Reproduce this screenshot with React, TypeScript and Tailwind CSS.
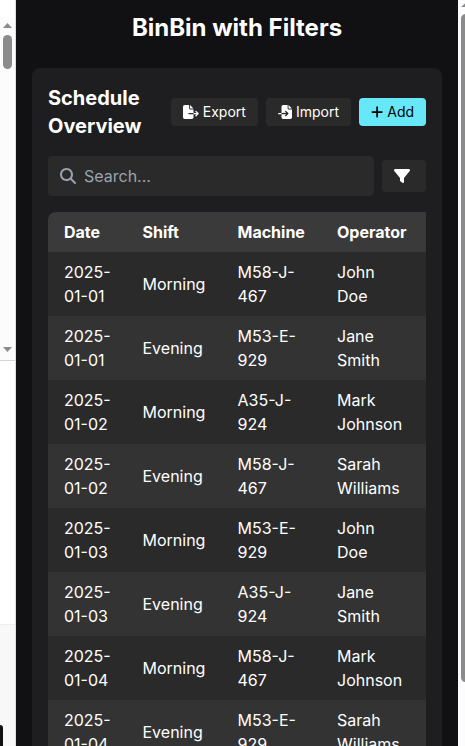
import React from "react";
import { FaFileExport, FaFileImport, FaFilter, FaMagnifyingGlass, FaPlus } from "react-icons/fa6";

const rows = [
  ["2025-01-01", "Morning", "M58-J-467", "John Doe"],
  ["2025-01-01", "Evening", "M53-E-929", "Jane Smith"],
  ["2025-01-02", "Morning", "A35-J-924", "Mark Johnson"],
  ["2025-01-02", "Evening", "M58-J-467", "Sarah Williams"],
  ["2025-01-03", "Morning", "M53-E-929", "John Doe"],
  ["2025-01-03", "Evening", "A35-J-924", "Jane Smith"],
  ["2025-01-04", "Morning", "M58-J-467", "Mark Johnson"],
  ["2025-01-04", "Evening", "M53-E-929", "Sarah Williams"],
];

function LeftPane() {
  return (
    <div className="flex w-4 shrink-0 flex-col border-r border-[#dedede] bg-white">
      <div className="h-[17px] shrink-0" />
      <div className="flex h-[344px] shrink-0 flex-col items-center border-b border-[#d4d4d4] bg-[#fcfcfc] pt-1.5">
        <svg className="h-[5px] w-[9px] shrink-0" viewBox="0 0 9 5" fill="#8b8b8b">
          <path d="M0 5 4.5 0 9 5Z" />
        </svg>
        <div className="mt-[7px] h-[34px] w-[9px] shrink-0 rounded-full bg-[#8b8b8b]" />
        <svg className="mt-auto mb-[8px] h-[5px] w-[9px] shrink-0" viewBox="0 0 9 5" fill="#8b8b8b">
          <path d="M0 0h9L4.5 5Z" />
        </svg>
      </div>
      <div className="h-[263px] shrink-0" />
      <div className="flex flex-1 flex-col justify-end border-t border-[#ededed] bg-[#f8f8f8]">
        <div className="h-[21px] w-[3px] rounded-tr-[3px] bg-[#111113]" />
      </div>
    </div>
  );
}

function RightScrollbar() {
  return (
    <div className="flex w-[7px] shrink-0 flex-col overflow-hidden bg-[#fcfcfc] pl-[3px]">
      <svg className="mt-[3px] h-1 w-[9px] shrink-0" viewBox="0 0 9 4" fill="#8b8b8b">
        <path d="M0 4 4.5 0 9 4Z" />
      </svg>
      <div className="mt-[7px] h-[668px] w-[9px] shrink-0 rounded-full bg-[#8b8b8b]" />
    </div>
  );
}

export default function App() {
  return (
    <div className="flex h-[746px] w-[465px] overflow-hidden bg-[#111113] font-['Inter',sans-serif] text-white">
      <LeftPane />
      <main className="flex w-[442px] shrink-0 flex-col px-4 pt-3">
        <h1 className="mb-6 text-center text-2xl font-bold">BinBin with Filters</h1>
        <section className="flex-1 rounded-t-lg bg-[#1e1e20] p-4">
          <div className="mb-4 flex items-center justify-between">
            <h2 className="w-[110px] text-xl leading-7 font-bold">Schedule Overview</h2>
            <div className="flex gap-2 text-sm">
              <button className="flex h-7 w-[87px] items-center gap-1 rounded bg-[#2a2a2a] pl-3">
                <FaFileExport className="h-3.5 w-[15.75px] shrink-0" />
                Export
              </button>
              <button className="flex h-7 w-[85px] items-center gap-1 rounded bg-[#2a2a2a] pl-3">
                <FaFileImport className="size-3.5 shrink-0" />
                Import
              </button>
              <button className="flex h-7 w-[67px] items-center gap-1 rounded bg-[#67e8f9] pl-3 text-black">
                <FaPlus className="h-3.5 w-[12.25px] shrink-0" />
                Add
              </button>
            </div>
          </div>
          <div className="mb-4 flex items-center gap-2">
            <div className="flex h-10 flex-1 items-center gap-2 rounded bg-[#2a2a2a] pl-3 text-[#9ca3af]">
              <FaMagnifyingGlass className="size-4" />
              <span>Search...</span>
            </div>
            <button className="flex h-8 w-11 items-center rounded bg-[#2a2a2a] pl-3">
              <FaFilter className="size-4" />
            </button>
          </div>
          <div className="overflow-hidden rounded-tl-lg">
            <table className="w-[378px] table-fixed text-left">
              <colgroup>
                <col className="w-[78.5px]" />
                <col className="w-[95px]" />
                <col className="w-[99.5px]" />
                <col className="w-[105px]" />
              </colgroup>
              <thead className="bg-[#3a3a3a]">
                <tr>
                  <th className="px-4 py-2 font-bold">Date</th>
                  <th className="px-4 py-2 font-bold">Shift</th>
                  <th className="px-4 py-2 font-bold">Machine</th>
                  <th className="py-2 pl-4 font-bold">Operator</th>
                </tr>
              </thead>
              <tbody>
                {rows.map((row, i) => (
                  <tr key={i} className="bg-[#2a2a2a] even:bg-[#333333]">
                    {row.map((cell, j) => (
                      <td key={j} className="px-4 py-2 last:pr-5">
                        {cell}
                      </td>
                    ))}
                  </tr>
                ))}
              </tbody>
            </table>
          </div>
        </section>
      </main>
      <RightScrollbar />
    </div>
  );
}
